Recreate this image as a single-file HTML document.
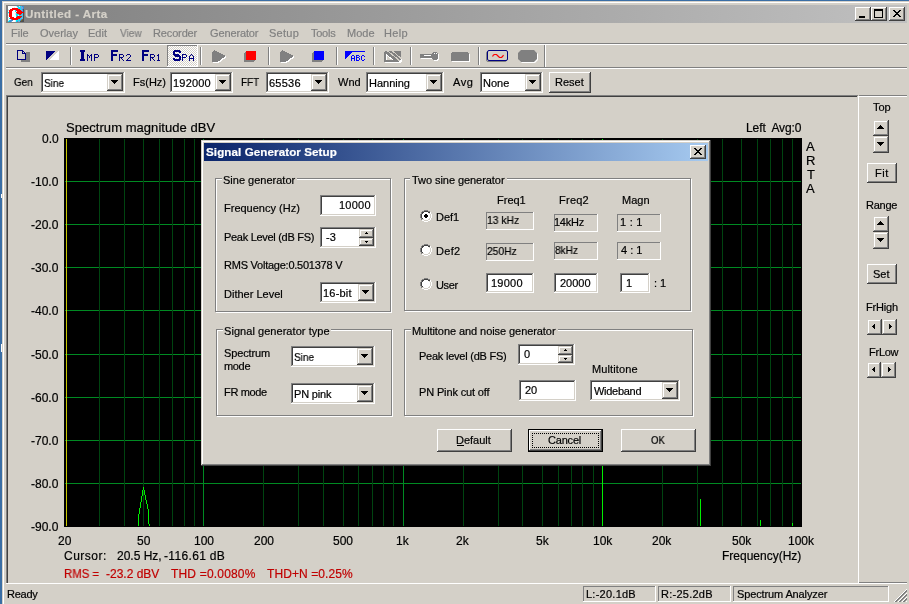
<!DOCTYPE html>
<html><head><meta charset="utf-8"><title>Arta</title>
<style>
html,body{margin:0;padding:0}
body{width:909px;height:604px;overflow:hidden;background:#d4d0c8;position:relative;font-family:"Liberation Sans",sans-serif}
div{position:absolute}
span{position:absolute;white-space:pre;line-height:20px;font-family:"Liberation Sans",sans-serif;will-change:transform;-webkit-text-stroke:0.2px}
</style></head><body>
<div style="left:0px;top:0px;width:909px;height:1px;background:#3a6ea5"></div>
<div style="left:0px;top:0px;width:2px;height:604px;background:#3a6ea5"></div>
<div style="left:1px;top:194px;width:1px;height:4px;background:#fff"></div>
<div style="left:1px;top:344px;width:1px;height:8px;background:#fff"></div>
<div style="left:2px;top:1px;width:907px;height:1px;background:#d4d0c8"></div>
<div style="left:2px;top:1px;width:1px;height:603px;background:#d4d0c8"></div>
<div style="left:3px;top:2px;width:906px;height:1px;background:#fff"></div>
<div style="left:3px;top:2px;width:1px;height:602px;background:#fff"></div>
<div style="left:6px;top:5px;width:901px;height:18px;background:linear-gradient(90deg,#808080,#c0c0c0)"></div>
<svg style="position:absolute;left:8px;top:6px" width="16" height="16" viewBox="0 0 16 16" shape-rendering="crispEdges"><rect x="0" y="0" width="8" height="1" fill="#ffffff"/><rect x="8" y="0" width="1" height="1" fill="#d6ecf8"/><rect x="9" y="0" width="1" height="1" fill="#00e8f8"/><rect x="10" y="0" width="1" height="1" fill="#6aa8e0"/><rect x="11" y="0" width="1" height="1" fill="#d6ecf8"/><rect x="12" y="0" width="1" height="1" fill="#00e8f8"/><rect x="13" y="0" width="1" height="1" fill="#6aa8e0"/><rect x="14" y="0" width="2" height="1" fill="#3c8cd0"/><rect x="0" y="1" width="6" height="1" fill="#ffffff"/><rect x="6" y="1" width="1" height="1" fill="#d6ecf8"/><rect x="7" y="1" width="2" height="1" fill="#ffffff"/><rect x="9" y="1" width="1" height="1" fill="#d6ecf8"/><rect x="10" y="1" width="2" height="1" fill="#00e8f8"/><rect x="12" y="1" width="3" height="1" fill="#6aa8e0"/><rect x="15" y="1" width="1" height="1" fill="#3c8cd0"/><rect x="0" y="2" width="4" height="1" fill="#ffffff"/><rect x="4" y="2" width="6" height="1" fill="#ff0000"/><rect x="10" y="2" width="3" height="1" fill="#00e8f8"/><rect x="13" y="2" width="2" height="1" fill="#6aa8e0"/><rect x="15" y="2" width="1" height="1" fill="#3c8cd0"/><rect x="0" y="3" width="1" height="1" fill="#d6ecf8"/><rect x="1" y="3" width="1" height="1" fill="#ffffff"/><rect x="2" y="3" width="10" height="1" fill="#ff0000"/><rect x="12" y="3" width="1" height="1" fill="#00e8f8"/><rect x="13" y="3" width="1" height="1" fill="#6aa8e0"/><rect x="14" y="3" width="1" height="1" fill="#3c8cd0"/><rect x="15" y="3" width="1" height="1" fill="#505050"/><rect x="0" y="4" width="1" height="1" fill="#d6ecf8"/><rect x="1" y="4" width="4" height="1" fill="#ff0000"/><rect x="5" y="4" width="2" height="1" fill="#ffffff"/><rect x="7" y="4" width="1" height="1" fill="#00e8f8"/><rect x="8" y="4" width="5" height="1" fill="#ff0000"/><rect x="13" y="4" width="2" height="1" fill="#6aa8e0"/><rect x="15" y="4" width="1" height="1" fill="#505050"/><rect x="0" y="5" width="1" height="1" fill="#ffffff"/><rect x="1" y="5" width="3" height="1" fill="#ff0000"/><rect x="4" y="5" width="3" height="1" fill="#ffffff"/><rect x="7" y="5" width="1" height="1" fill="#00e8f8"/><rect x="8" y="5" width="1" height="1" fill="#d6ecf8"/><rect x="9" y="5" width="5" height="1" fill="#ff0000"/><rect x="14" y="5" width="1" height="1" fill="#3c8cd0"/><rect x="15" y="5" width="1" height="1" fill="#505050"/><rect x="0" y="6" width="1" height="1" fill="#00e8f8"/><rect x="1" y="6" width="3" height="1" fill="#ff0000"/><rect x="4" y="6" width="4" height="1" fill="#ffffff"/><rect x="8" y="6" width="8" height="1" fill="#ff0000"/><rect x="0" y="7" width="1" height="1" fill="#d6ecf8"/><rect x="1" y="7" width="3" height="1" fill="#ff0000"/><rect x="4" y="7" width="3" height="1" fill="#ffffff"/><rect x="7" y="7" width="1" height="1" fill="#d6ecf8"/><rect x="8" y="7" width="1" height="1" fill="#00e8f8"/><rect x="9" y="7" width="5" height="1" fill="#ff0000"/><rect x="14" y="7" width="1" height="1" fill="#00e8f8"/><rect x="15" y="7" width="1" height="1" fill="#505050"/><rect x="0" y="8" width="1" height="1" fill="#ffffff"/><rect x="1" y="8" width="3" height="1" fill="#ff0000"/><rect x="4" y="8" width="3" height="1" fill="#ffffff"/><rect x="7" y="8" width="1" height="1" fill="#d6ecf8"/><rect x="8" y="8" width="3" height="1" fill="#00e8f8"/><rect x="11" y="8" width="2" height="1" fill="#ff0000"/><rect x="13" y="8" width="1" height="1" fill="#00e8f8"/><rect x="14" y="8" width="1" height="1" fill="#6aa8e0"/><rect x="15" y="8" width="1" height="1" fill="#505050"/><rect x="0" y="9" width="1" height="1" fill="#d6ecf8"/><rect x="1" y="9" width="3" height="1" fill="#ff0000"/><rect x="4" y="9" width="4" height="1" fill="#ffffff"/><rect x="8" y="9" width="2" height="1" fill="#00e8f8"/><rect x="10" y="9" width="1" height="1" fill="#d6ecf8"/><rect x="11" y="9" width="2" height="1" fill="#00e8f8"/><rect x="13" y="9" width="2" height="1" fill="#6aa8e0"/><rect x="15" y="9" width="1" height="1" fill="#505050"/><rect x="0" y="10" width="1" height="1" fill="#ffffff"/><rect x="1" y="10" width="3" height="1" fill="#ff0000"/><rect x="4" y="10" width="4" height="1" fill="#ffffff"/><rect x="8" y="10" width="1" height="1" fill="#00e8f8"/><rect x="9" y="10" width="5" height="1" fill="#ff0000"/><rect x="14" y="10" width="1" height="1" fill="#00e8f8"/><rect x="15" y="10" width="1" height="1" fill="#505050"/><rect x="0" y="11" width="1" height="1" fill="#d6ecf8"/><rect x="1" y="11" width="1" height="1" fill="#ffffff"/><rect x="2" y="11" width="4" height="1" fill="#ff0000"/><rect x="6" y="11" width="2" height="1" fill="#ffffff"/><rect x="8" y="11" width="5" height="1" fill="#ff0000"/><rect x="13" y="11" width="1" height="1" fill="#00e8f8"/><rect x="14" y="11" width="1" height="1" fill="#6aa8e0"/><rect x="15" y="11" width="1" height="1" fill="#505050"/><rect x="0" y="12" width="1" height="1" fill="#ffffff"/><rect x="1" y="12" width="1" height="1" fill="#00e8f8"/><rect x="2" y="12" width="10" height="1" fill="#ff0000"/><rect x="12" y="12" width="1" height="1" fill="#00e8f8"/><rect x="13" y="12" width="2" height="1" fill="#6aa8e0"/><rect x="15" y="12" width="1" height="1" fill="#505050"/><rect x="0" y="13" width="1" height="1" fill="#d6ecf8"/><rect x="1" y="13" width="1" height="1" fill="#ffffff"/><rect x="2" y="13" width="1" height="1" fill="#d6ecf8"/><rect x="3" y="13" width="1" height="1" fill="#3c8cd0"/><rect x="4" y="13" width="6" height="1" fill="#ff0000"/><rect x="10" y="13" width="2" height="1" fill="#00e8f8"/><rect x="12" y="13" width="1" height="1" fill="#6aa8e0"/><rect x="13" y="13" width="1" height="1" fill="#3c8cd0"/><rect x="14" y="13" width="1" height="1" fill="#807020"/><rect x="15" y="13" width="1" height="1" fill="#505050"/><rect x="0" y="14" width="1" height="1" fill="#d6ecf8"/><rect x="1" y="14" width="1" height="1" fill="#00e8f8"/><rect x="2" y="14" width="3" height="1" fill="#3c8cd0"/><rect x="5" y="14" width="2" height="1" fill="#ffffff"/><rect x="7" y="14" width="1" height="1" fill="#d6ecf8"/><rect x="8" y="14" width="2" height="1" fill="#00e8f8"/><rect x="10" y="14" width="1" height="1" fill="#6aa8e0"/><rect x="11" y="14" width="1" height="1" fill="#00e8f8"/><rect x="12" y="14" width="1" height="1" fill="#3c8cd0"/><rect x="13" y="14" width="1" height="1" fill="#807020"/><rect x="14" y="14" width="2" height="1" fill="#505050"/><rect x="0" y="15" width="1" height="1" fill="#00e8f8"/><rect x="1" y="15" width="2" height="1" fill="#3c8cd0"/><rect x="3" y="15" width="1" height="1" fill="#6aa8e0"/><rect x="4" y="15" width="3" height="1" fill="#ffffff"/><rect x="7" y="15" width="1" height="1" fill="#d6ecf8"/><rect x="8" y="15" width="1" height="1" fill="#00e8f8"/><rect x="9" y="15" width="1" height="1" fill="#3c8cd0"/><rect x="10" y="15" width="2" height="1" fill="#6aa8e0"/><rect x="12" y="15" width="4" height="1" fill="#505050"/></svg>
<div style="left:855px;top:7px;width:16px;height:14px;background:#d4d0c8;box-shadow:inset -1px -1px #404040,inset 1px 1px #fff,inset -2px -2px #808080,inset 2px 2px #d4d0c8;"></div>
<div style="left:859px;top:16px;width:6px;height:2px;background:#000"></div>
<div style="left:871px;top:7px;width:16px;height:14px;background:#d4d0c8;box-shadow:inset -1px -1px #404040,inset 1px 1px #fff,inset -2px -2px #808080,inset 2px 2px #d4d0c8;"></div>
<div style="left:874px;top:9px;width:9px;height:2px;background:#000"></div>
<div style="left:874px;top:9px;width:1px;height:9px;background:#000"></div>
<div style="left:882px;top:9px;width:1px;height:9px;background:#000"></div>
<div style="left:874px;top:17px;width:9px;height:1px;background:#000"></div>
<div style="left:889px;top:7px;width:16px;height:14px;background:#d4d0c8;box-shadow:inset -1px -1px #404040,inset 1px 1px #fff,inset -2px -2px #808080,inset 2px 2px #d4d0c8;"></div>
<svg style="position:absolute;left:893px;top:10px" width="8" height="7" viewBox="0 0 8 7" shape-rendering="crispEdges"><rect x="0" y="0" width="2" height="1" fill="#000"/><rect x="6" y="0" width="2" height="1" fill="#000"/><rect x="1" y="1" width="2" height="1" fill="#000"/><rect x="5" y="1" width="2" height="1" fill="#000"/><rect x="2" y="2" width="4" height="1" fill="#000"/><rect x="3" y="3" width="2" height="1" fill="#000"/><rect x="2" y="4" width="4" height="1" fill="#000"/><rect x="1" y="5" width="2" height="1" fill="#000"/><rect x="5" y="5" width="2" height="1" fill="#000"/><rect x="0" y="6" width="2" height="1" fill="#000"/><rect x="6" y="6" width="2" height="1" fill="#000"/></svg>
<div style="left:6px;top:43px;width:901px;height:1px;background:#808080"></div>
<div style="left:6px;top:44px;width:901px;height:1px;background:#fff"></div>
<div style="left:6px;top:67px;width:901px;height:1px;background:#808080"></div>
<div style="left:6px;top:68px;width:901px;height:1px;background:#fff"></div>
<div style="left:70px;top:47px;width:1px;height:18px;background:#808080"></div>
<div style="left:71px;top:47px;width:1px;height:18px;background:#fff"></div>
<div style="left:200px;top:47px;width:1px;height:18px;background:#808080"></div>
<div style="left:201px;top:47px;width:1px;height:18px;background:#fff"></div>
<div style="left:268px;top:47px;width:1px;height:18px;background:#808080"></div>
<div style="left:269px;top:47px;width:1px;height:18px;background:#fff"></div>
<div style="left:336px;top:47px;width:1px;height:18px;background:#808080"></div>
<div style="left:337px;top:47px;width:1px;height:18px;background:#fff"></div>
<div style="left:373px;top:47px;width:1px;height:18px;background:#808080"></div>
<div style="left:374px;top:47px;width:1px;height:18px;background:#fff"></div>
<div style="left:410px;top:47px;width:1px;height:18px;background:#808080"></div>
<div style="left:411px;top:47px;width:1px;height:18px;background:#fff"></div>
<div style="left:478px;top:47px;width:1px;height:18px;background:#808080"></div>
<div style="left:479px;top:47px;width:1px;height:18px;background:#fff"></div>
<div style="left:544px;top:45px;width:1px;height:22px;background:#808080"></div>
<div style="left:545px;top:45px;width:1px;height:22px;background:#fff"></div>
<svg style="position:absolute;left:17px;top:50px" width="14" height="13" viewBox="0 0 14 13" shape-rendering="crispEdges"><rect x="4" y="2" width="9" height="10" fill="#808080"/><rect x="0" y="0" width="9" height="10" fill="#d4d0c8"/><rect x="0" y="0" width="6" height="1" fill="#000080"/><rect x="0" y="1" width="1" height="1" fill="#000080"/><rect x="5" y="1" width="2" height="1" fill="#000080"/><rect x="0" y="2" width="1" height="1" fill="#000080"/><rect x="5" y="2" width="1" height="1" fill="#000080"/><rect x="7" y="2" width="1" height="1" fill="#000080"/><rect x="0" y="3" width="1" height="1" fill="#000080"/><rect x="5" y="3" width="4" height="1" fill="#000080"/><rect x="0" y="4" width="1" height="1" fill="#000080"/><rect x="8" y="4" width="1" height="1" fill="#000080"/><rect x="0" y="5" width="1" height="1" fill="#000080"/><rect x="8" y="5" width="1" height="1" fill="#000080"/><rect x="0" y="6" width="1" height="1" fill="#000080"/><rect x="8" y="6" width="1" height="1" fill="#000080"/><rect x="0" y="7" width="1" height="1" fill="#000080"/><rect x="8" y="7" width="1" height="1" fill="#000080"/><rect x="0" y="8" width="1" height="1" fill="#000080"/><rect x="8" y="8" width="1" height="1" fill="#000080"/><rect x="0" y="9" width="9" height="1" fill="#000080"/><rect x="6" y="0" width="3" height="1" fill="#d4d0c8"/><rect x="7" y="1" width="2" height="1" fill="#d4d0c8"/><rect x="8" y="2" width="1" height="1" fill="#d4d0c8"/></svg>
<svg style="position:absolute;left:46px;top:51px" width="13" height="9" viewBox="0 0 13 9" shape-rendering="crispEdges"><polygon points="0,0 10,0 0,9.5" fill="#000080"/><polygon points="13,0 13,9 3.5,9" fill="#fff"/></svg>
<svg style="position:absolute;left:80px;top:50px" width="26" height="12" viewBox="0 0 26 12" shape-rendering="crispEdges"><rect x="0" y="0" width="5" height="1" fill="#000080"/><rect x="0" y="1" width="5" height="1" fill="#000080"/><rect x="1" y="2" width="3" height="1" fill="#000080"/><rect x="1" y="3" width="3" height="1" fill="#000080"/><rect x="1" y="4" width="3" height="1" fill="#000080"/><rect x="1" y="5" width="3" height="1" fill="#000080"/><rect x="1" y="6" width="3" height="1" fill="#000080"/><rect x="1" y="7" width="3" height="1" fill="#000080"/><rect x="1" y="8" width="3" height="1" fill="#000080"/><rect x="0" y="9" width="5" height="1" fill="#000080"/><rect x="0" y="10" width="5" height="1" fill="#000080"/><rect x="7" y="4" width="1" height="1" fill="#000080"/><rect x="11" y="4" width="1" height="1" fill="#000080"/><rect x="7" y="5" width="2" height="1" fill="#000080"/><rect x="10" y="5" width="2" height="1" fill="#000080"/><rect x="7" y="6" width="1" height="1" fill="#000080"/><rect x="9" y="6" width="1" height="1" fill="#000080"/><rect x="11" y="6" width="1" height="1" fill="#000080"/><rect x="7" y="7" width="1" height="1" fill="#000080"/><rect x="9" y="7" width="1" height="1" fill="#000080"/><rect x="11" y="7" width="1" height="1" fill="#000080"/><rect x="7" y="8" width="1" height="1" fill="#000080"/><rect x="11" y="8" width="1" height="1" fill="#000080"/><rect x="7" y="9" width="1" height="1" fill="#000080"/><rect x="11" y="9" width="1" height="1" fill="#000080"/><rect x="7" y="10" width="1" height="1" fill="#000080"/><rect x="11" y="10" width="1" height="1" fill="#000080"/><rect x="14" y="4" width="4" height="1" fill="#000080"/><rect x="14" y="5" width="1" height="1" fill="#000080"/><rect x="18" y="5" width="1" height="1" fill="#000080"/><rect x="14" y="6" width="1" height="1" fill="#000080"/><rect x="18" y="6" width="1" height="1" fill="#000080"/><rect x="14" y="7" width="4" height="1" fill="#000080"/><rect x="14" y="8" width="1" height="1" fill="#000080"/><rect x="14" y="9" width="1" height="1" fill="#000080"/><rect x="14" y="10" width="1" height="1" fill="#000080"/></svg>
<svg style="position:absolute;left:111px;top:50px" width="26" height="12" viewBox="0 0 26 12" shape-rendering="crispEdges"><rect x="0" y="0" width="7" height="1" fill="#000080"/><rect x="0" y="1" width="7" height="1" fill="#000080"/><rect x="0" y="2" width="2" height="1" fill="#000080"/><rect x="0" y="3" width="2" height="1" fill="#000080"/><rect x="0" y="4" width="6" height="1" fill="#000080"/><rect x="0" y="5" width="6" height="1" fill="#000080"/><rect x="0" y="6" width="2" height="1" fill="#000080"/><rect x="0" y="7" width="2" height="1" fill="#000080"/><rect x="0" y="8" width="2" height="1" fill="#000080"/><rect x="0" y="9" width="2" height="1" fill="#000080"/><rect x="0" y="10" width="2" height="1" fill="#000080"/><rect x="8" y="4" width="4" height="1" fill="#000080"/><rect x="8" y="5" width="1" height="1" fill="#000080"/><rect x="12" y="5" width="1" height="1" fill="#000080"/><rect x="8" y="6" width="1" height="1" fill="#000080"/><rect x="12" y="6" width="1" height="1" fill="#000080"/><rect x="8" y="7" width="4" height="1" fill="#000080"/><rect x="8" y="8" width="1" height="1" fill="#000080"/><rect x="10" y="8" width="1" height="1" fill="#000080"/><rect x="8" y="9" width="1" height="1" fill="#000080"/><rect x="11" y="9" width="1" height="1" fill="#000080"/><rect x="8" y="10" width="1" height="1" fill="#000080"/><rect x="12" y="10" width="1" height="1" fill="#000080"/><rect x="16" y="4" width="3" height="1" fill="#000080"/><rect x="15" y="5" width="1" height="1" fill="#000080"/><rect x="19" y="5" width="1" height="1" fill="#000080"/><rect x="19" y="6" width="1" height="1" fill="#000080"/><rect x="18" y="7" width="1" height="1" fill="#000080"/><rect x="17" y="8" width="1" height="1" fill="#000080"/><rect x="16" y="9" width="1" height="1" fill="#000080"/><rect x="15" y="10" width="5" height="1" fill="#000080"/></svg>
<svg style="position:absolute;left:142px;top:50px" width="26" height="12" viewBox="0 0 26 12" shape-rendering="crispEdges"><rect x="0" y="0" width="7" height="1" fill="#000080"/><rect x="0" y="1" width="7" height="1" fill="#000080"/><rect x="0" y="2" width="2" height="1" fill="#000080"/><rect x="0" y="3" width="2" height="1" fill="#000080"/><rect x="0" y="4" width="6" height="1" fill="#000080"/><rect x="0" y="5" width="6" height="1" fill="#000080"/><rect x="0" y="6" width="2" height="1" fill="#000080"/><rect x="0" y="7" width="2" height="1" fill="#000080"/><rect x="0" y="8" width="2" height="1" fill="#000080"/><rect x="0" y="9" width="2" height="1" fill="#000080"/><rect x="0" y="10" width="2" height="1" fill="#000080"/><rect x="8" y="4" width="4" height="1" fill="#000080"/><rect x="8" y="5" width="1" height="1" fill="#000080"/><rect x="12" y="5" width="1" height="1" fill="#000080"/><rect x="8" y="6" width="1" height="1" fill="#000080"/><rect x="12" y="6" width="1" height="1" fill="#000080"/><rect x="8" y="7" width="4" height="1" fill="#000080"/><rect x="8" y="8" width="1" height="1" fill="#000080"/><rect x="10" y="8" width="1" height="1" fill="#000080"/><rect x="8" y="9" width="1" height="1" fill="#000080"/><rect x="11" y="9" width="1" height="1" fill="#000080"/><rect x="8" y="10" width="1" height="1" fill="#000080"/><rect x="12" y="10" width="1" height="1" fill="#000080"/><rect x="16" y="4" width="1" height="1" fill="#000080"/><rect x="15" y="5" width="2" height="1" fill="#000080"/><rect x="16" y="6" width="1" height="1" fill="#000080"/><rect x="16" y="7" width="1" height="1" fill="#000080"/><rect x="16" y="8" width="1" height="1" fill="#000080"/><rect x="16" y="9" width="1" height="1" fill="#000080"/><rect x="15" y="10" width="3" height="1" fill="#000080"/></svg>
<div style="left:167px;top:45px;width:31px;height:22px;background:#d4d0c8 conic-gradient(#fff 25%,#d4d0c8 0 50%,#fff 0 75%,#d4d0c8 0) 0 0/2px 2px;box-shadow:inset -1px -1px #fff,inset 1px 1px #808080"></div>
<svg style="position:absolute;left:173px;top:50px" width="26" height="12" viewBox="0 0 26 12" shape-rendering="crispEdges"><rect x="1" y="0" width="6" height="1" fill="#000080"/><rect x="0" y="1" width="8" height="1" fill="#000080"/><rect x="0" y="2" width="2" height="1" fill="#000080"/><rect x="6" y="2" width="2" height="1" fill="#000080"/><rect x="0" y="3" width="2" height="1" fill="#000080"/><rect x="0" y="4" width="6" height="1" fill="#000080"/><rect x="1" y="5" width="6" height="1" fill="#000080"/><rect x="2" y="6" width="6" height="1" fill="#000080"/><rect x="6" y="7" width="2" height="1" fill="#000080"/><rect x="0" y="8" width="2" height="1" fill="#000080"/><rect x="6" y="8" width="2" height="1" fill="#000080"/><rect x="0" y="9" width="8" height="1" fill="#000080"/><rect x="1" y="10" width="6" height="1" fill="#000080"/><rect x="9" y="4" width="4" height="1" fill="#000080"/><rect x="9" y="5" width="1" height="1" fill="#000080"/><rect x="13" y="5" width="1" height="1" fill="#000080"/><rect x="9" y="6" width="1" height="1" fill="#000080"/><rect x="13" y="6" width="1" height="1" fill="#000080"/><rect x="9" y="7" width="4" height="1" fill="#000080"/><rect x="9" y="8" width="1" height="1" fill="#000080"/><rect x="9" y="9" width="1" height="1" fill="#000080"/><rect x="9" y="10" width="1" height="1" fill="#000080"/><rect x="18" y="4" width="1" height="1" fill="#000080"/><rect x="17" y="5" width="1" height="1" fill="#000080"/><rect x="19" y="5" width="1" height="1" fill="#000080"/><rect x="16" y="6" width="1" height="1" fill="#000080"/><rect x="20" y="6" width="1" height="1" fill="#000080"/><rect x="16" y="7" width="1" height="1" fill="#000080"/><rect x="20" y="7" width="1" height="1" fill="#000080"/><rect x="16" y="8" width="5" height="1" fill="#000080"/><rect x="16" y="9" width="1" height="1" fill="#000080"/><rect x="20" y="9" width="1" height="1" fill="#000080"/><rect x="16" y="10" width="1" height="1" fill="#000080"/><rect x="20" y="10" width="1" height="1" fill="#000080"/></svg>
<svg style="position:absolute;left:212px;top:50px" width="16" height="14" viewBox="0 0 16 14" shape-rendering="crispEdges"><polygon points="1,3 3,1 15,7 6.5,13 1,13" fill="#fff"/><polygon points="0,2 2,0 14,6 5.5,12 0,12" fill="#808080"/></svg>
<svg style="position:absolute;left:280px;top:50px" width="16" height="14" viewBox="0 0 16 14" shape-rendering="crispEdges"><polygon points="1,3 3,1 15,7 6.5,13 1,13" fill="#fff"/><polygon points="0,2 2,0 14,6 5.5,12 0,12" fill="#808080"/></svg>
<svg style="position:absolute;left:244px;top:51px" width="12" height="11" viewBox="0 0 12 11" shape-rendering="crispEdges"><polygon points="0,2 2,0 11,0 11,9 9,11 0,11" fill="#808080"/><rect x="2" y="0" width="10" height="9" fill="#ff0000"/></svg>
<svg style="position:absolute;left:312px;top:51px" width="12" height="11" viewBox="0 0 12 11" shape-rendering="crispEdges"><polygon points="0,2 2,0 11,0 11,9 9,11 0,11" fill="#808080"/><rect x="2" y="0" width="10" height="9" fill="#0000ff"/></svg>
<svg style="position:absolute;left:345px;top:51px" width="21" height="10" viewBox="0 0 21 10" shape-rendering="crispEdges"><rect x="0" y="0" width="20" height="1" fill="#00f"/><rect x="0" y="0" width="8" height="1" fill="#0000ff"/><rect x="0" y="1" width="7" height="1" fill="#0000ff"/><rect x="0" y="2" width="6" height="1" fill="#0000ff"/><rect x="0" y="3" width="5" height="1" fill="#0000ff"/><rect x="0" y="4" width="4" height="1" fill="#0000ff"/><rect x="0" y="5" width="3" height="1" fill="#0000ff"/><rect x="0" y="6" width="2" height="1" fill="#0000ff"/><rect x="0" y="7" width="1" height="1" fill="#0000ff"/><rect x="7" y="4" width="2" height="1" fill="#00f"/><rect x="6" y="5" width="1" height="1" fill="#00f"/><rect x="9" y="5" width="1" height="1" fill="#00f"/><rect x="6" y="6" width="1" height="1" fill="#00f"/><rect x="9" y="6" width="1" height="1" fill="#00f"/><rect x="6" y="7" width="4" height="1" fill="#00f"/><rect x="6" y="8" width="1" height="1" fill="#00f"/><rect x="9" y="8" width="1" height="1" fill="#00f"/><rect x="6" y="9" width="1" height="1" fill="#00f"/><rect x="9" y="9" width="1" height="1" fill="#00f"/><rect x="11" y="4" width="3" height="1" fill="#00f"/><rect x="11" y="5" width="1" height="1" fill="#00f"/><rect x="14" y="5" width="1" height="1" fill="#00f"/><rect x="11" y="6" width="3" height="1" fill="#00f"/><rect x="11" y="7" width="1" height="1" fill="#00f"/><rect x="14" y="7" width="1" height="1" fill="#00f"/><rect x="11" y="8" width="1" height="1" fill="#00f"/><rect x="14" y="8" width="1" height="1" fill="#00f"/><rect x="11" y="9" width="3" height="1" fill="#00f"/><rect x="17" y="4" width="2" height="1" fill="#00f"/><rect x="16" y="5" width="1" height="1" fill="#00f"/><rect x="19" y="5" width="1" height="1" fill="#00f"/><rect x="16" y="6" width="1" height="1" fill="#00f"/><rect x="16" y="7" width="1" height="1" fill="#00f"/><rect x="16" y="8" width="1" height="1" fill="#00f"/><rect x="19" y="8" width="1" height="1" fill="#00f"/><rect x="17" y="9" width="2" height="1" fill="#00f"/></svg>
<svg style="position:absolute;left:384px;top:51px" width="19" height="13" viewBox="0 0 19 13" shape-rendering="crispEdges"><polygon points="1,2 2,1 17,1 17,8 18,8 18,11 16,12 1,12" fill="#fff"/><polygon points="0,1 1,0 17,0 17,8 15,11 0,11" fill="#808080"/><polygon points="2,3 2,9 10,9" fill="#fff"/><polygon points="3,5 3,9 8.5,9" fill="#d4d0c8"/><line x1="3" y1="-0.5" x2="16" y2="10" stroke="#d4d0c8" stroke-width="1.1"/><line x1="8" y1="-0.5" x2="17.5" y2="8" stroke="#d4d0c8" stroke-width="1.1"/></svg>
<svg style="position:absolute;left:420px;top:52px" width="20" height="10" viewBox="0 0 20 10" shape-rendering="crispEdges"><rect x="14" y="1" width="4" height="1" fill="#fff"/><rect x="13" y="2" width="6" height="1" fill="#fff"/><rect x="1" y="3" width="18" height="1" fill="#fff"/><rect x="1" y="4" width="18" height="1" fill="#fff"/><rect x="1" y="5" width="18" height="1" fill="#fff"/><rect x="1" y="6" width="18" height="1" fill="#fff"/><rect x="13" y="7" width="6" height="1" fill="#fff"/><rect x="14" y="8" width="4" height="1" fill="#fff"/><rect x="13" y="0" width="4" height="1" fill="#808080"/><rect x="12" y="1" width="2" height="1" fill="#808080"/><rect x="14" y="1" width="1" height="1" fill="#fff"/><rect x="15" y="1" width="1" height="1" fill="#808080"/><rect x="16" y="1" width="1" height="1" fill="#fff"/><rect x="17" y="1" width="1" height="1" fill="#808080"/><rect x="0" y="2" width="18" height="1" fill="#808080"/><rect x="0" y="3" width="4" height="1" fill="#808080"/><rect x="4" y="3" width="7" height="1" fill="#fff"/><rect x="11" y="3" width="7" height="1" fill="#808080"/><rect x="0" y="4" width="18" height="1" fill="#808080"/><rect x="0" y="5" width="18" height="1" fill="#808080"/><rect x="12" y="6" width="6" height="1" fill="#808080"/><rect x="13" y="7" width="4" height="1" fill="#808080"/></svg>
<svg style="position:absolute;left:451px;top:52px" width="20" height="11" viewBox="0 0 20 11" shape-rendering="crispEdges"><rect x="2" y="1" width="16" height="1" fill="#fff"/><rect x="1" y="2" width="18" height="1" fill="#fff"/><rect x="1" y="3" width="18" height="1" fill="#fff"/><rect x="1" y="4" width="18" height="1" fill="#fff"/><rect x="1" y="5" width="18" height="1" fill="#fff"/><rect x="1" y="6" width="18" height="1" fill="#fff"/><rect x="1" y="7" width="18" height="1" fill="#fff"/><rect x="1" y="8" width="18" height="1" fill="#fff"/><rect x="1" y="9" width="18" height="1" fill="#fff"/><rect x="1" y="0" width="16" height="1" fill="#808080"/><rect x="0" y="1" width="18" height="1" fill="#808080"/><rect x="0" y="2" width="18" height="1" fill="#808080"/><rect x="0" y="3" width="18" height="1" fill="#808080"/><rect x="0" y="4" width="18" height="1" fill="#808080"/><rect x="0" y="5" width="18" height="1" fill="#808080"/><rect x="0" y="6" width="18" height="1" fill="#808080"/><rect x="0" y="7" width="18" height="1" fill="#808080"/><rect x="0" y="8" width="18" height="1" fill="#808080"/></svg>
<svg style="position:absolute;left:486px;top:50px" width="23" height="13" viewBox="0 0 23 13" shape-rendering="auto"><rect x="0.5" y="1.5" width="20" height="10" rx="1.5" fill="none" stroke="#808080"/><rect x="1.5" y="0.5" width="20" height="10" rx="1.5" fill="#d4d0c8" stroke="#000080"/><polyline points="6.5,6.5 7.5,5 8.5,4.5 10.5,4.5 12.5,6.5 13.5,7.5 15.5,7.5 16.5,6.5 17.5,5" fill="none" stroke="#ff0000" stroke-width="1.2"/></svg>
<svg style="position:absolute;left:518px;top:50px" width="21" height="14" viewBox="0 0 21 14" shape-rendering="auto"><polygon points="4,1 17,1 20,4 20,10 17,13 4,13 1,10 1,4" fill="#fff"/><polygon points="3,0 16,0 19,3 19,9 16,12 3,12 0,9 0,3" fill="#808080"/></svg>
<div style="left:41px;top:72px;width:84px;height:21px;background:#fff;box-shadow:inset -1px -1px #fff,inset 1px 1px #808080,inset -2px -2px #d4d0c8,inset 2px 2px #404040"></div>
<div style="left:107px;top:74px;width:16px;height:17px;background:#d4d0c8;box-shadow:inset -1px -1px #404040,inset 1px 1px #d4d0c8,inset -2px -2px #808080,inset 2px 2px #fff"></div>
<div style="left:111px;top:80px;width:7px;height:1px;background:#000"></div>
<div style="left:112px;top:81px;width:5px;height:1px;background:#000"></div>
<div style="left:113px;top:82px;width:3px;height:1px;background:#000"></div>
<div style="left:114px;top:83px;width:1px;height:1px;background:#000"></div>
<div style="left:170px;top:72px;width:63px;height:21px;background:#fff;box-shadow:inset -1px -1px #fff,inset 1px 1px #808080,inset -2px -2px #d4d0c8,inset 2px 2px #404040"></div>
<div style="left:215px;top:74px;width:16px;height:17px;background:#d4d0c8;box-shadow:inset -1px -1px #404040,inset 1px 1px #d4d0c8,inset -2px -2px #808080,inset 2px 2px #fff"></div>
<div style="left:219px;top:80px;width:7px;height:1px;background:#000"></div>
<div style="left:220px;top:81px;width:5px;height:1px;background:#000"></div>
<div style="left:221px;top:82px;width:3px;height:1px;background:#000"></div>
<div style="left:222px;top:83px;width:1px;height:1px;background:#000"></div>
<div style="left:266px;top:72px;width:63px;height:21px;background:#fff;box-shadow:inset -1px -1px #fff,inset 1px 1px #808080,inset -2px -2px #d4d0c8,inset 2px 2px #404040"></div>
<div style="left:311px;top:74px;width:16px;height:17px;background:#d4d0c8;box-shadow:inset -1px -1px #404040,inset 1px 1px #d4d0c8,inset -2px -2px #808080,inset 2px 2px #fff"></div>
<div style="left:315px;top:80px;width:7px;height:1px;background:#000"></div>
<div style="left:316px;top:81px;width:5px;height:1px;background:#000"></div>
<div style="left:317px;top:82px;width:3px;height:1px;background:#000"></div>
<div style="left:318px;top:83px;width:1px;height:1px;background:#000"></div>
<div style="left:366px;top:72px;width:78px;height:21px;background:#fff;box-shadow:inset -1px -1px #fff,inset 1px 1px #808080,inset -2px -2px #d4d0c8,inset 2px 2px #404040"></div>
<div style="left:426px;top:74px;width:16px;height:17px;background:#d4d0c8;box-shadow:inset -1px -1px #404040,inset 1px 1px #d4d0c8,inset -2px -2px #808080,inset 2px 2px #fff"></div>
<div style="left:430px;top:80px;width:7px;height:1px;background:#000"></div>
<div style="left:431px;top:81px;width:5px;height:1px;background:#000"></div>
<div style="left:432px;top:82px;width:3px;height:1px;background:#000"></div>
<div style="left:433px;top:83px;width:1px;height:1px;background:#000"></div>
<div style="left:480px;top:72px;width:63px;height:21px;background:#fff;box-shadow:inset -1px -1px #fff,inset 1px 1px #808080,inset -2px -2px #d4d0c8,inset 2px 2px #404040"></div>
<div style="left:525px;top:74px;width:16px;height:17px;background:#d4d0c8;box-shadow:inset -1px -1px #404040,inset 1px 1px #d4d0c8,inset -2px -2px #808080,inset 2px 2px #fff"></div>
<div style="left:529px;top:80px;width:7px;height:1px;background:#000"></div>
<div style="left:530px;top:81px;width:5px;height:1px;background:#000"></div>
<div style="left:531px;top:82px;width:3px;height:1px;background:#000"></div>
<div style="left:532px;top:83px;width:1px;height:1px;background:#000"></div>
<div style="left:549px;top:72px;width:42px;height:21px;background:#d4d0c8;box-shadow:inset -1px -1px #404040,inset 1px 1px #fff,inset -2px -2px #808080,inset 2px 2px #d4d0c8;"></div>
<div style="left:6px;top:95px;width:852px;height:1px;background:#808080"></div>
<div style="left:6px;top:95px;width:1px;height:488px;background:#808080"></div>
<div style="left:7px;top:96px;width:850px;height:1px;background:#404040"></div>
<div style="left:7px;top:96px;width:1px;height:487px;background:#404040"></div>
<div style="left:858px;top:96px;width:1px;height:488px;background:#fff"></div>
<div style="left:6px;top:583px;width:853px;height:1px;background:#fff"></div>
<div style="left:859px;top:95px;width:48px;height:1px;background:#808080"></div>
<div style="left:859px;top:96px;width:48px;height:1px;background:#fff"></div>
<div style="left:859px;top:582px;width:48px;height:1px;background:#808080"></div>
<div style="left:859px;top:583px;width:48px;height:1px;background:#fff"></div>
<div style="left:64px;top:138px;width:738px;height:389px;background:#000"></div>
<div style="left:65px;top:181px;width:736px;height:1px;background:#008a22"></div>
<div style="left:65px;top:224px;width:736px;height:1px;background:#008a22"></div>
<div style="left:65px;top:267px;width:736px;height:1px;background:#008a22"></div>
<div style="left:65px;top:310px;width:736px;height:1px;background:#008a22"></div>
<div style="left:65px;top:354px;width:736px;height:1px;background:#008a22"></div>
<div style="left:65px;top:397px;width:736px;height:1px;background:#008a22"></div>
<div style="left:65px;top:440px;width:736px;height:1px;background:#008a22"></div>
<div style="left:65px;top:483px;width:736px;height:1px;background:#008a22"></div>
<div style="left:99px;top:139px;width:1px;height:387px;background:#004410"></div>
<div style="left:124px;top:139px;width:1px;height:387px;background:#004410"></div>
<div style="left:143px;top:139px;width:1px;height:387px;background:#004410"></div>
<div style="left:159px;top:139px;width:1px;height:387px;background:#004410"></div>
<div style="left:172px;top:139px;width:1px;height:387px;background:#004410"></div>
<div style="left:184px;top:139px;width:1px;height:387px;background:#004410"></div>
<div style="left:194px;top:139px;width:1px;height:387px;background:#004410"></div>
<div style="left:203px;top:139px;width:1px;height:387px;background:#008a22"></div>
<div style="left:263px;top:139px;width:1px;height:387px;background:#004410"></div>
<div style="left:298px;top:139px;width:1px;height:387px;background:#004410"></div>
<div style="left:323px;top:139px;width:1px;height:387px;background:#004410"></div>
<div style="left:343px;top:139px;width:1px;height:387px;background:#004410"></div>
<div style="left:358px;top:139px;width:1px;height:387px;background:#004410"></div>
<div style="left:372px;top:139px;width:1px;height:387px;background:#004410"></div>
<div style="left:383px;top:139px;width:1px;height:387px;background:#004410"></div>
<div style="left:393px;top:139px;width:1px;height:387px;background:#004410"></div>
<div style="left:403px;top:139px;width:1px;height:387px;background:#008a22"></div>
<div style="left:463px;top:139px;width:1px;height:387px;background:#004410"></div>
<div style="left:498px;top:139px;width:1px;height:387px;background:#004410"></div>
<div style="left:522px;top:139px;width:1px;height:387px;background:#004410"></div>
<div style="left:542px;top:139px;width:1px;height:387px;background:#004410"></div>
<div style="left:558px;top:139px;width:1px;height:387px;background:#004410"></div>
<div style="left:571px;top:139px;width:1px;height:387px;background:#004410"></div>
<div style="left:582px;top:139px;width:1px;height:387px;background:#004410"></div>
<div style="left:593px;top:139px;width:1px;height:387px;background:#004410"></div>
<div style="left:602px;top:139px;width:1px;height:387px;background:#008a22"></div>
<div style="left:662px;top:139px;width:1px;height:387px;background:#004410"></div>
<div style="left:697px;top:139px;width:1px;height:387px;background:#004410"></div>
<div style="left:722px;top:139px;width:1px;height:387px;background:#004410"></div>
<div style="left:741px;top:139px;width:1px;height:387px;background:#004410"></div>
<div style="left:757px;top:139px;width:1px;height:387px;background:#004410"></div>
<div style="left:770px;top:139px;width:1px;height:387px;background:#004410"></div>
<div style="left:782px;top:139px;width:1px;height:387px;background:#004410"></div>
<div style="left:792px;top:139px;width:1px;height:387px;background:#004410"></div>
<div style="left:66px;top:139px;width:1px;height:387px;background:#c8c800"></div>
<div style="left:602px;top:139px;width:1px;height:387px;background:#00ee00"></div>
<div style="left:700px;top:499px;width:1px;height:27px;background:#00ee00"></div>
<div style="left:760px;top:520px;width:1px;height:6px;background:#00ee00"></div>
<div style="left:792px;top:523px;width:1px;height:3px;background:#00ee00"></div>
<div style="left:143px;top:487px;width:1px;height:3px;background:#00ee00"></div>
<div style="left:142px;top:490px;width:1px;height:6px;background:#00ee00"></div>
<div style="left:141px;top:496px;width:1px;height:6px;background:#00ee00"></div>
<div style="left:140px;top:502px;width:1px;height:6px;background:#00ee00"></div>
<div style="left:139px;top:508px;width:1px;height:6px;background:#00ee00"></div>
<div style="left:138px;top:514px;width:1px;height:12px;background:#00ee00"></div>
<div style="left:144px;top:490px;width:1px;height:5px;background:#00ee00"></div>
<div style="left:145px;top:495px;width:1px;height:5px;background:#00ee00"></div>
<div style="left:146px;top:500px;width:1px;height:4px;background:#00ee00"></div>
<div style="left:147px;top:504px;width:1px;height:5px;background:#00ee00"></div>
<div style="left:148px;top:509px;width:1px;height:15px;background:#00ee00"></div>
<div style="left:149px;top:524px;width:1px;height:2px;background:#00ee00"></div>
<div style="left:873px;top:120px;width:16px;height:16px;background:#d4d0c8;box-shadow:inset -1px -1px #404040,inset 1px 1px #d4d0c8,inset -2px -2px #808080,inset 2px 2px #fff"></div>
<div style="left:873px;top:136px;width:16px;height:17px;background:#d4d0c8;box-shadow:inset -1px -1px #404040,inset 1px 1px #d4d0c8,inset -2px -2px #808080,inset 2px 2px #fff"></div>
<div style="left:880px;top:125px;width:1px;height:1px;background:#000"></div>
<div style="left:879px;top:126px;width:3px;height:1px;background:#000"></div>
<div style="left:878px;top:127px;width:5px;height:1px;background:#000"></div>
<div style="left:877px;top:128px;width:7px;height:1px;background:#000"></div>
<div style="left:877px;top:142px;width:7px;height:1px;background:#000"></div>
<div style="left:878px;top:143px;width:5px;height:1px;background:#000"></div>
<div style="left:879px;top:144px;width:3px;height:1px;background:#000"></div>
<div style="left:880px;top:145px;width:1px;height:1px;background:#000"></div>
<div style="left:873px;top:216px;width:16px;height:16px;background:#d4d0c8;box-shadow:inset -1px -1px #404040,inset 1px 1px #d4d0c8,inset -2px -2px #808080,inset 2px 2px #fff"></div>
<div style="left:873px;top:232px;width:16px;height:17px;background:#d4d0c8;box-shadow:inset -1px -1px #404040,inset 1px 1px #d4d0c8,inset -2px -2px #808080,inset 2px 2px #fff"></div>
<div style="left:880px;top:221px;width:1px;height:1px;background:#000"></div>
<div style="left:879px;top:222px;width:3px;height:1px;background:#000"></div>
<div style="left:878px;top:223px;width:5px;height:1px;background:#000"></div>
<div style="left:877px;top:224px;width:7px;height:1px;background:#000"></div>
<div style="left:877px;top:238px;width:7px;height:1px;background:#000"></div>
<div style="left:878px;top:239px;width:5px;height:1px;background:#000"></div>
<div style="left:879px;top:240px;width:3px;height:1px;background:#000"></div>
<div style="left:880px;top:241px;width:1px;height:1px;background:#000"></div>
<div style="left:867px;top:163px;width:30px;height:20px;background:#d4d0c8;box-shadow:inset -1px -1px #404040,inset 1px 1px #fff,inset -2px -2px #808080,inset 2px 2px #d4d0c8;"></div>
<div style="left:867px;top:264px;width:30px;height:20px;background:#d4d0c8;box-shadow:inset -1px -1px #404040,inset 1px 1px #fff,inset -2px -2px #808080,inset 2px 2px #d4d0c8;"></div>
<div style="left:867px;top:319px;width:15px;height:16px;background:#d4d0c8;box-shadow:inset -1px -1px #404040,inset 1px 1px #d4d0c8,inset -2px -2px #808080,inset 2px 2px #fff"></div>
<div style="left:882px;top:319px;width:15px;height:16px;background:#d4d0c8;box-shadow:inset -1px -1px #404040,inset 1px 1px #d4d0c8,inset -2px -2px #808080,inset 2px 2px #fff"></div>
<div style="left:872px;top:326px;width:1px;height:1px;background:#000"></div>
<div style="left:891px;top:326px;width:1px;height:1px;background:#000"></div>
<div style="left:873px;top:325px;width:1px;height:3px;background:#000"></div>
<div style="left:890px;top:325px;width:1px;height:3px;background:#000"></div>
<div style="left:874px;top:324px;width:1px;height:5px;background:#000"></div>
<div style="left:889px;top:324px;width:1px;height:5px;background:#000"></div>
<div style="left:867px;top:362px;width:14px;height:16px;background:#d4d0c8;box-shadow:inset -1px -1px #404040,inset 1px 1px #d4d0c8,inset -2px -2px #808080,inset 2px 2px #fff"></div>
<div style="left:881px;top:362px;width:15px;height:16px;background:#d4d0c8;box-shadow:inset -1px -1px #404040,inset 1px 1px #d4d0c8,inset -2px -2px #808080,inset 2px 2px #fff"></div>
<div style="left:872px;top:369px;width:1px;height:1px;background:#000"></div>
<div style="left:890px;top:369px;width:1px;height:1px;background:#000"></div>
<div style="left:873px;top:368px;width:1px;height:3px;background:#000"></div>
<div style="left:889px;top:368px;width:1px;height:3px;background:#000"></div>
<div style="left:874px;top:367px;width:1px;height:5px;background:#000"></div>
<div style="left:888px;top:367px;width:1px;height:5px;background:#000"></div>
<div style="left:583px;top:586px;width:73px;height:16px;background:#d4d0c8;box-shadow:inset -1px -1px #fff,inset 1px 1px #808080"></div>
<div style="left:658px;top:586px;width:73px;height:16px;background:#d4d0c8;box-shadow:inset -1px -1px #fff,inset 1px 1px #808080"></div>
<div style="left:733px;top:586px;width:156px;height:16px;background:#d4d0c8;box-shadow:inset -1px -1px #fff,inset 1px 1px #808080"></div>
<svg style="position:absolute;left:894px;top:589px" width="13" height="13" viewBox="0 0 13 13" shape-rendering="crispEdges"><rect x="12" y="0" width="1" height="1" fill="#fff"/><rect x="11" y="1" width="1" height="1" fill="#fff"/><rect x="12" y="1" width="1" height="1" fill="#808080"/><rect x="10" y="2" width="1" height="1" fill="#fff"/><rect x="11" y="2" width="2" height="1" fill="#808080"/><rect x="9" y="3" width="1" height="1" fill="#fff"/><rect x="10" y="3" width="2" height="1" fill="#808080"/><rect x="8" y="4" width="1" height="1" fill="#fff"/><rect x="9" y="4" width="2" height="1" fill="#808080"/><rect x="12" y="4" width="1" height="1" fill="#fff"/><rect x="7" y="5" width="1" height="1" fill="#fff"/><rect x="8" y="5" width="2" height="1" fill="#808080"/><rect x="11" y="5" width="1" height="1" fill="#fff"/><rect x="12" y="5" width="1" height="1" fill="#808080"/><rect x="6" y="6" width="1" height="1" fill="#fff"/><rect x="7" y="6" width="2" height="1" fill="#808080"/><rect x="10" y="6" width="1" height="1" fill="#fff"/><rect x="11" y="6" width="2" height="1" fill="#808080"/><rect x="5" y="7" width="1" height="1" fill="#fff"/><rect x="6" y="7" width="2" height="1" fill="#808080"/><rect x="9" y="7" width="1" height="1" fill="#fff"/><rect x="10" y="7" width="2" height="1" fill="#808080"/><rect x="4" y="8" width="1" height="1" fill="#fff"/><rect x="5" y="8" width="2" height="1" fill="#808080"/><rect x="8" y="8" width="1" height="1" fill="#fff"/><rect x="9" y="8" width="2" height="1" fill="#808080"/><rect x="12" y="8" width="1" height="1" fill="#fff"/><rect x="3" y="9" width="1" height="1" fill="#fff"/><rect x="4" y="9" width="2" height="1" fill="#808080"/><rect x="7" y="9" width="1" height="1" fill="#fff"/><rect x="8" y="9" width="2" height="1" fill="#808080"/><rect x="11" y="9" width="1" height="1" fill="#fff"/><rect x="12" y="9" width="1" height="1" fill="#808080"/><rect x="2" y="10" width="1" height="1" fill="#fff"/><rect x="3" y="10" width="2" height="1" fill="#808080"/><rect x="6" y="10" width="1" height="1" fill="#fff"/><rect x="7" y="10" width="2" height="1" fill="#808080"/><rect x="10" y="10" width="1" height="1" fill="#fff"/><rect x="11" y="10" width="2" height="1" fill="#808080"/><rect x="1" y="11" width="1" height="1" fill="#fff"/><rect x="2" y="11" width="2" height="1" fill="#808080"/><rect x="5" y="11" width="1" height="1" fill="#fff"/><rect x="6" y="11" width="2" height="1" fill="#808080"/><rect x="9" y="11" width="1" height="1" fill="#fff"/><rect x="10" y="11" width="2" height="1" fill="#808080"/><rect x="0" y="12" width="1" height="1" fill="#fff"/><rect x="1" y="12" width="2" height="1" fill="#808080"/><rect x="4" y="12" width="1" height="1" fill="#fff"/><rect x="5" y="12" width="2" height="1" fill="#808080"/><rect x="8" y="12" width="1" height="1" fill="#fff"/><rect x="9" y="12" width="2" height="1" fill="#808080"/><rect x="12" y="12" width="1" height="1" fill="#fff"/></svg>
<div style="left:201px;top:140px;width:510px;height:326px;background:#d4d0c8;box-shadow:inset -1px -1px #404040,inset 1px 1px #d4d0c8,inset -2px -2px #808080,inset 2px 2px #fff"></div>
<div style="left:204px;top:143px;width:504px;height:18px;background:linear-gradient(90deg,#0a246a,#a6caf0)"></div>
<div style="left:690px;top:145px;width:16px;height:14px;background:#d4d0c8;box-shadow:inset -1px -1px #404040,inset 1px 1px #fff,inset -2px -2px #808080,inset 2px 2px #d4d0c8;"></div>
<svg style="position:absolute;left:694px;top:148px" width="8" height="7" viewBox="0 0 8 7" shape-rendering="crispEdges"><rect x="0" y="0" width="2" height="1" fill="#000"/><rect x="6" y="0" width="2" height="1" fill="#000"/><rect x="1" y="1" width="2" height="1" fill="#000"/><rect x="5" y="1" width="2" height="1" fill="#000"/><rect x="2" y="2" width="4" height="1" fill="#000"/><rect x="3" y="3" width="2" height="1" fill="#000"/><rect x="2" y="4" width="4" height="1" fill="#000"/><rect x="1" y="5" width="2" height="1" fill="#000"/><rect x="5" y="5" width="2" height="1" fill="#000"/><rect x="0" y="6" width="2" height="1" fill="#000"/><rect x="6" y="6" width="2" height="1" fill="#000"/></svg>
<div style="left:216px;top:179px;width:176px;height:134px;box-sizing:border-box;border:1px solid #fff"></div>
<div style="left:215px;top:178px;width:176px;height:134px;box-sizing:border-box;border:1px solid #808080"></div>
<div style="left:217px;top:330px;width:176px;height:87px;box-sizing:border-box;border:1px solid #fff"></div>
<div style="left:216px;top:329px;width:176px;height:87px;box-sizing:border-box;border:1px solid #808080"></div>
<div style="left:405px;top:179px;width:287px;height:133px;box-sizing:border-box;border:1px solid #fff"></div>
<div style="left:404px;top:178px;width:287px;height:133px;box-sizing:border-box;border:1px solid #808080"></div>
<div style="left:405px;top:330px;width:289px;height:87px;box-sizing:border-box;border:1px solid #fff"></div>
<div style="left:404px;top:329px;width:289px;height:87px;box-sizing:border-box;border:1px solid #808080"></div>
<div style="left:222px;top:174px;width:75px;height:14px;background:#d4d0c8"></div>
<div style="left:223px;top:325px;width:108px;height:14px;background:#d4d0c8"></div>
<div style="left:410px;top:174px;width:97px;height:14px;background:#d4d0c8"></div>
<div style="left:411px;top:325px;width:147px;height:14px;background:#d4d0c8"></div>
<div style="left:320px;top:195px;width:56px;height:21px;background:#fff;box-shadow:inset -1px -1px #fff,inset 1px 1px #808080,inset -2px -2px #d4d0c8,inset 2px 2px #404040"></div>
<div style="left:320px;top:227px;width:56px;height:21px;background:#fff;box-shadow:inset -1px -1px #fff,inset 1px 1px #808080,inset -2px -2px #d4d0c8,inset 2px 2px #404040"></div>
<div style="left:359px;top:229px;width:15px;height:9px;background:#d4d0c8;box-shadow:inset -1px -1px #404040,inset 1px 1px #d4d0c8,inset -2px -2px #808080,inset 2px 2px #fff"></div>
<div style="left:359px;top:238px;width:15px;height:8px;background:#d4d0c8;box-shadow:inset -1px -1px #404040,inset 1px 1px #d4d0c8,inset -2px -2px #808080,inset 2px 2px #fff"></div>
<div style="left:366px;top:232px;width:1px;height:1px;background:#000"></div>
<div style="left:365px;top:233px;width:3px;height:1px;background:#000"></div>
<div style="left:365px;top:241px;width:3px;height:1px;background:#000"></div>
<div style="left:366px;top:242px;width:1px;height:1px;background:#000"></div>
<div style="left:320px;top:282px;width:56px;height:21px;background:#fff;box-shadow:inset -1px -1px #fff,inset 1px 1px #808080,inset -2px -2px #d4d0c8,inset 2px 2px #404040"></div>
<div style="left:358px;top:284px;width:16px;height:17px;background:#d4d0c8;box-shadow:inset -1px -1px #404040,inset 1px 1px #d4d0c8,inset -2px -2px #808080,inset 2px 2px #fff"></div>
<div style="left:362px;top:290px;width:7px;height:1px;background:#000"></div>
<div style="left:363px;top:291px;width:5px;height:1px;background:#000"></div>
<div style="left:364px;top:292px;width:3px;height:1px;background:#000"></div>
<div style="left:365px;top:293px;width:1px;height:1px;background:#000"></div>
<div style="left:291px;top:346px;width:84px;height:21px;background:#fff;box-shadow:inset -1px -1px #fff,inset 1px 1px #808080,inset -2px -2px #d4d0c8,inset 2px 2px #404040"></div>
<div style="left:357px;top:348px;width:16px;height:17px;background:#d4d0c8;box-shadow:inset -1px -1px #404040,inset 1px 1px #d4d0c8,inset -2px -2px #808080,inset 2px 2px #fff"></div>
<div style="left:361px;top:354px;width:7px;height:1px;background:#000"></div>
<div style="left:362px;top:355px;width:5px;height:1px;background:#000"></div>
<div style="left:363px;top:356px;width:3px;height:1px;background:#000"></div>
<div style="left:364px;top:357px;width:1px;height:1px;background:#000"></div>
<div style="left:291px;top:383px;width:84px;height:21px;background:#fff;box-shadow:inset -1px -1px #fff,inset 1px 1px #808080,inset -2px -2px #d4d0c8,inset 2px 2px #404040"></div>
<div style="left:357px;top:385px;width:16px;height:17px;background:#d4d0c8;box-shadow:inset -1px -1px #404040,inset 1px 1px #d4d0c8,inset -2px -2px #808080,inset 2px 2px #fff"></div>
<div style="left:361px;top:391px;width:7px;height:1px;background:#000"></div>
<div style="left:362px;top:392px;width:5px;height:1px;background:#000"></div>
<div style="left:363px;top:393px;width:3px;height:1px;background:#000"></div>
<div style="left:364px;top:394px;width:1px;height:1px;background:#000"></div>
<svg style="position:absolute;left:420px;top:210px" width="12" height="12" viewBox="0 0 12 12" shape-rendering="crispEdges"><rect x="4" y="0" width="4" height="1" fill="#808080"/><rect x="2" y="1" width="2" height="1" fill="#808080"/><rect x="4" y="1" width="4" height="1" fill="#404040"/><rect x="8" y="1" width="2" height="1" fill="#808080"/><rect x="1" y="2" width="1" height="1" fill="#808080"/><rect x="2" y="2" width="2" height="1" fill="#404040"/><rect x="4" y="2" width="4" height="1" fill="#fff"/><rect x="8" y="2" width="2" height="1" fill="#404040"/><rect x="10" y="2" width="1" height="1" fill="#fff"/><rect x="1" y="3" width="1" height="1" fill="#808080"/><rect x="2" y="3" width="1" height="1" fill="#404040"/><rect x="3" y="3" width="6" height="1" fill="#fff"/><rect x="9" y="3" width="1" height="1" fill="#d4d0c8"/><rect x="10" y="3" width="1" height="1" fill="#fff"/><rect x="0" y="4" width="1" height="1" fill="#808080"/><rect x="1" y="4" width="1" height="1" fill="#404040"/><rect x="2" y="4" width="3" height="1" fill="#fff"/><rect x="5" y="4" width="2" height="1" fill="#000"/><rect x="7" y="4" width="3" height="1" fill="#fff"/><rect x="10" y="4" width="1" height="1" fill="#d4d0c8"/><rect x="11" y="4" width="1" height="1" fill="#fff"/><rect x="0" y="5" width="1" height="1" fill="#808080"/><rect x="1" y="5" width="1" height="1" fill="#404040"/><rect x="2" y="5" width="2" height="1" fill="#fff"/><rect x="4" y="5" width="4" height="1" fill="#000"/><rect x="8" y="5" width="2" height="1" fill="#fff"/><rect x="10" y="5" width="1" height="1" fill="#d4d0c8"/><rect x="11" y="5" width="1" height="1" fill="#fff"/><rect x="0" y="6" width="1" height="1" fill="#808080"/><rect x="1" y="6" width="1" height="1" fill="#404040"/><rect x="2" y="6" width="2" height="1" fill="#fff"/><rect x="4" y="6" width="4" height="1" fill="#000"/><rect x="8" y="6" width="2" height="1" fill="#fff"/><rect x="10" y="6" width="1" height="1" fill="#d4d0c8"/><rect x="11" y="6" width="1" height="1" fill="#fff"/><rect x="0" y="7" width="1" height="1" fill="#808080"/><rect x="1" y="7" width="1" height="1" fill="#404040"/><rect x="2" y="7" width="3" height="1" fill="#fff"/><rect x="5" y="7" width="2" height="1" fill="#000"/><rect x="7" y="7" width="3" height="1" fill="#fff"/><rect x="10" y="7" width="1" height="1" fill="#d4d0c8"/><rect x="11" y="7" width="1" height="1" fill="#fff"/><rect x="1" y="8" width="1" height="1" fill="#808080"/><rect x="2" y="8" width="1" height="1" fill="#404040"/><rect x="3" y="8" width="6" height="1" fill="#fff"/><rect x="9" y="8" width="1" height="1" fill="#d4d0c8"/><rect x="10" y="8" width="1" height="1" fill="#fff"/><rect x="1" y="9" width="1" height="1" fill="#808080"/><rect x="2" y="9" width="2" height="1" fill="#d4d0c8"/><rect x="4" y="9" width="4" height="1" fill="#fff"/><rect x="8" y="9" width="2" height="1" fill="#d4d0c8"/><rect x="10" y="9" width="1" height="1" fill="#fff"/><rect x="2" y="10" width="2" height="1" fill="#fff"/><rect x="4" y="10" width="4" height="1" fill="#d4d0c8"/><rect x="8" y="10" width="2" height="1" fill="#fff"/><rect x="4" y="11" width="4" height="1" fill="#fff"/></svg>
<svg style="position:absolute;left:420px;top:244px" width="12" height="12" viewBox="0 0 12 12" shape-rendering="crispEdges"><rect x="4" y="0" width="4" height="1" fill="#808080"/><rect x="2" y="1" width="2" height="1" fill="#808080"/><rect x="4" y="1" width="4" height="1" fill="#404040"/><rect x="8" y="1" width="2" height="1" fill="#808080"/><rect x="1" y="2" width="1" height="1" fill="#808080"/><rect x="2" y="2" width="2" height="1" fill="#404040"/><rect x="4" y="2" width="4" height="1" fill="#fff"/><rect x="8" y="2" width="2" height="1" fill="#404040"/><rect x="10" y="2" width="1" height="1" fill="#fff"/><rect x="1" y="3" width="1" height="1" fill="#808080"/><rect x="2" y="3" width="1" height="1" fill="#404040"/><rect x="3" y="3" width="6" height="1" fill="#fff"/><rect x="9" y="3" width="1" height="1" fill="#d4d0c8"/><rect x="10" y="3" width="1" height="1" fill="#fff"/><rect x="0" y="4" width="1" height="1" fill="#808080"/><rect x="1" y="4" width="1" height="1" fill="#404040"/><rect x="2" y="4" width="8" height="1" fill="#fff"/><rect x="10" y="4" width="1" height="1" fill="#d4d0c8"/><rect x="11" y="4" width="1" height="1" fill="#fff"/><rect x="0" y="5" width="1" height="1" fill="#808080"/><rect x="1" y="5" width="1" height="1" fill="#404040"/><rect x="2" y="5" width="8" height="1" fill="#fff"/><rect x="10" y="5" width="1" height="1" fill="#d4d0c8"/><rect x="11" y="5" width="1" height="1" fill="#fff"/><rect x="0" y="6" width="1" height="1" fill="#808080"/><rect x="1" y="6" width="1" height="1" fill="#404040"/><rect x="2" y="6" width="8" height="1" fill="#fff"/><rect x="10" y="6" width="1" height="1" fill="#d4d0c8"/><rect x="11" y="6" width="1" height="1" fill="#fff"/><rect x="0" y="7" width="1" height="1" fill="#808080"/><rect x="1" y="7" width="1" height="1" fill="#404040"/><rect x="2" y="7" width="8" height="1" fill="#fff"/><rect x="10" y="7" width="1" height="1" fill="#d4d0c8"/><rect x="11" y="7" width="1" height="1" fill="#fff"/><rect x="1" y="8" width="1" height="1" fill="#808080"/><rect x="2" y="8" width="1" height="1" fill="#404040"/><rect x="3" y="8" width="6" height="1" fill="#fff"/><rect x="9" y="8" width="1" height="1" fill="#d4d0c8"/><rect x="10" y="8" width="1" height="1" fill="#fff"/><rect x="1" y="9" width="1" height="1" fill="#808080"/><rect x="2" y="9" width="2" height="1" fill="#d4d0c8"/><rect x="4" y="9" width="4" height="1" fill="#fff"/><rect x="8" y="9" width="2" height="1" fill="#d4d0c8"/><rect x="10" y="9" width="1" height="1" fill="#fff"/><rect x="2" y="10" width="2" height="1" fill="#fff"/><rect x="4" y="10" width="4" height="1" fill="#d4d0c8"/><rect x="8" y="10" width="2" height="1" fill="#fff"/><rect x="4" y="11" width="4" height="1" fill="#fff"/></svg>
<svg style="position:absolute;left:420px;top:278px" width="12" height="12" viewBox="0 0 12 12" shape-rendering="crispEdges"><rect x="4" y="0" width="4" height="1" fill="#808080"/><rect x="2" y="1" width="2" height="1" fill="#808080"/><rect x="4" y="1" width="4" height="1" fill="#404040"/><rect x="8" y="1" width="2" height="1" fill="#808080"/><rect x="1" y="2" width="1" height="1" fill="#808080"/><rect x="2" y="2" width="2" height="1" fill="#404040"/><rect x="4" y="2" width="4" height="1" fill="#fff"/><rect x="8" y="2" width="2" height="1" fill="#404040"/><rect x="10" y="2" width="1" height="1" fill="#fff"/><rect x="1" y="3" width="1" height="1" fill="#808080"/><rect x="2" y="3" width="1" height="1" fill="#404040"/><rect x="3" y="3" width="6" height="1" fill="#fff"/><rect x="9" y="3" width="1" height="1" fill="#d4d0c8"/><rect x="10" y="3" width="1" height="1" fill="#fff"/><rect x="0" y="4" width="1" height="1" fill="#808080"/><rect x="1" y="4" width="1" height="1" fill="#404040"/><rect x="2" y="4" width="8" height="1" fill="#fff"/><rect x="10" y="4" width="1" height="1" fill="#d4d0c8"/><rect x="11" y="4" width="1" height="1" fill="#fff"/><rect x="0" y="5" width="1" height="1" fill="#808080"/><rect x="1" y="5" width="1" height="1" fill="#404040"/><rect x="2" y="5" width="8" height="1" fill="#fff"/><rect x="10" y="5" width="1" height="1" fill="#d4d0c8"/><rect x="11" y="5" width="1" height="1" fill="#fff"/><rect x="0" y="6" width="1" height="1" fill="#808080"/><rect x="1" y="6" width="1" height="1" fill="#404040"/><rect x="2" y="6" width="8" height="1" fill="#fff"/><rect x="10" y="6" width="1" height="1" fill="#d4d0c8"/><rect x="11" y="6" width="1" height="1" fill="#fff"/><rect x="0" y="7" width="1" height="1" fill="#808080"/><rect x="1" y="7" width="1" height="1" fill="#404040"/><rect x="2" y="7" width="8" height="1" fill="#fff"/><rect x="10" y="7" width="1" height="1" fill="#d4d0c8"/><rect x="11" y="7" width="1" height="1" fill="#fff"/><rect x="1" y="8" width="1" height="1" fill="#808080"/><rect x="2" y="8" width="1" height="1" fill="#404040"/><rect x="3" y="8" width="6" height="1" fill="#fff"/><rect x="9" y="8" width="1" height="1" fill="#d4d0c8"/><rect x="10" y="8" width="1" height="1" fill="#fff"/><rect x="1" y="9" width="1" height="1" fill="#808080"/><rect x="2" y="9" width="2" height="1" fill="#d4d0c8"/><rect x="4" y="9" width="4" height="1" fill="#fff"/><rect x="8" y="9" width="2" height="1" fill="#d4d0c8"/><rect x="10" y="9" width="1" height="1" fill="#fff"/><rect x="2" y="10" width="2" height="1" fill="#fff"/><rect x="4" y="10" width="4" height="1" fill="#d4d0c8"/><rect x="8" y="10" width="2" height="1" fill="#fff"/><rect x="4" y="11" width="4" height="1" fill="#fff"/></svg>
<div style="left:486px;top:212px;width:48px;height:18px;background:#d4d0c8;box-shadow:inset -1px -1px #fff,inset 1px 1px #808080"></div>
<div style="left:554px;top:214px;width:44px;height:18px;background:#d4d0c8;box-shadow:inset -1px -1px #fff,inset 1px 1px #808080"></div>
<div style="left:617px;top:214px;width:44px;height:18px;background:#d4d0c8;box-shadow:inset -1px -1px #fff,inset 1px 1px #808080"></div>
<div style="left:486px;top:243px;width:48px;height:18px;background:#d4d0c8;box-shadow:inset -1px -1px #fff,inset 1px 1px #808080"></div>
<div style="left:554px;top:242px;width:44px;height:18px;background:#d4d0c8;box-shadow:inset -1px -1px #fff,inset 1px 1px #808080"></div>
<div style="left:617px;top:242px;width:44px;height:18px;background:#d4d0c8;box-shadow:inset -1px -1px #fff,inset 1px 1px #808080"></div>
<div style="left:486px;top:273px;width:48px;height:20px;background:#fff;box-shadow:inset -1px -1px #fff,inset 1px 1px #808080,inset -2px -2px #d4d0c8,inset 2px 2px #404040"></div>
<div style="left:554px;top:273px;width:44px;height:20px;background:#fff;box-shadow:inset -1px -1px #fff,inset 1px 1px #808080,inset -2px -2px #d4d0c8,inset 2px 2px #404040"></div>
<div style="left:620px;top:273px;width:30px;height:20px;background:#fff;box-shadow:inset -1px -1px #fff,inset 1px 1px #808080,inset -2px -2px #d4d0c8,inset 2px 2px #404040"></div>
<div style="left:518px;top:344px;width:57px;height:21px;background:#fff;box-shadow:inset -1px -1px #fff,inset 1px 1px #808080,inset -2px -2px #d4d0c8,inset 2px 2px #404040"></div>
<div style="left:558px;top:346px;width:15px;height:9px;background:#d4d0c8;box-shadow:inset -1px -1px #404040,inset 1px 1px #d4d0c8,inset -2px -2px #808080,inset 2px 2px #fff"></div>
<div style="left:558px;top:355px;width:15px;height:8px;background:#d4d0c8;box-shadow:inset -1px -1px #404040,inset 1px 1px #d4d0c8,inset -2px -2px #808080,inset 2px 2px #fff"></div>
<div style="left:565px;top:349px;width:1px;height:1px;background:#000"></div>
<div style="left:564px;top:350px;width:3px;height:1px;background:#000"></div>
<div style="left:564px;top:358px;width:3px;height:1px;background:#000"></div>
<div style="left:565px;top:359px;width:1px;height:1px;background:#000"></div>
<div style="left:519px;top:380px;width:57px;height:21px;background:#fff;box-shadow:inset -1px -1px #fff,inset 1px 1px #808080,inset -2px -2px #d4d0c8,inset 2px 2px #404040"></div>
<div style="left:590px;top:380px;width:90px;height:21px;background:#fff;box-shadow:inset -1px -1px #fff,inset 1px 1px #808080,inset -2px -2px #d4d0c8,inset 2px 2px #404040"></div>
<div style="left:662px;top:382px;width:16px;height:17px;background:#d4d0c8;box-shadow:inset -1px -1px #404040,inset 1px 1px #d4d0c8,inset -2px -2px #808080,inset 2px 2px #fff"></div>
<div style="left:666px;top:388px;width:7px;height:1px;background:#000"></div>
<div style="left:667px;top:389px;width:5px;height:1px;background:#000"></div>
<div style="left:668px;top:390px;width:3px;height:1px;background:#000"></div>
<div style="left:669px;top:391px;width:1px;height:1px;background:#000"></div>
<div style="left:437px;top:429px;width:75px;height:23px;background:#d4d0c8;box-shadow:inset -1px -1px #404040,inset 1px 1px #fff,inset -2px -2px #808080,inset 2px 2px #d4d0c8;"></div>
<div style="left:457px;top:445px;width:7px;height:1px;background:#000"></div>
<div style="left:528px;top:429px;width:75px;height:23px;background:#000"></div>
<div style="left:529px;top:430px;width:73px;height:21px;background:#d4d0c8;box-shadow:inset -1px -1px #404040,inset 1px 1px #fff,inset -2px -2px #808080,inset 2px 2px #d4d0c8;"></div>
<div style="left:532px;top:433px;width:67px;height:15px;box-sizing:border-box;border:1px dotted #000"></div>
<div style="left:621px;top:429px;width:75px;height:23px;background:#d4d0c8;box-shadow:inset -1px -1px #404040,inset 1px 1px #fff,inset -2px -2px #808080,inset 2px 2px #d4d0c8;"></div>
<span style="left:25px;top:4px;font-size:11.6px;font-weight:700;color:#d4d0c8;letter-spacing:0.429px;">Untitled - Arta</span>
<span style="left:11px;top:23px;font-size:11px;font-weight:400;color:#808080;">File</span>
<span style="left:40px;top:23px;font-size:11px;font-weight:400;color:#808080;">Overlay</span>
<span style="left:88px;top:23px;font-size:11px;font-weight:400;color:#808080;">Edit</span>
<span style="left:120px;top:23px;font-size:11px;font-weight:400;color:#808080;transform-origin:0px 0;transform:scaleX(0.9167);">View</span>
<span style="left:153px;top:23px;font-size:11px;font-weight:400;color:#808080;letter-spacing:-0.143px;">Recorder</span>
<span style="left:210px;top:23px;font-size:11px;font-weight:400;color:#808080;letter-spacing:-0.125px;">Generator</span>
<span style="left:269px;top:23px;font-size:11px;font-weight:400;color:#808080;letter-spacing:0.250px;">Setup</span>
<span style="left:311px;top:23px;font-size:11px;font-weight:400;color:#808080;letter-spacing:-0.250px;">Tools</span>
<span style="left:347px;top:23px;font-size:11px;font-weight:400;color:#808080;">Mode</span>
<span style="left:384px;top:23px;font-size:11px;font-weight:400;color:#808080;letter-spacing:0.333px;">Help</span>
<span style="left:14px;top:72px;font-size:11px;font-weight:400;color:#000;transform-origin:0px 0;transform:scaleX(0.9000);">Gen</span>
<span style="left:44px;top:73px;font-size:11px;font-weight:400;color:#000;transform-origin:1px 0;transform:scaleX(0.9048);">Sine</span>
<span style="left:133px;top:72px;font-size:11px;font-weight:400;color:#000;">Fs(Hz)</span>
<span style="left:173px;top:73px;font-size:11px;font-weight:400;color:#000;letter-spacing:0.200px;">192000</span>
<span style="left:241px;top:72px;font-size:11px;font-weight:400;color:#000;transform-origin:1px 0;transform:scaleX(0.8947);">FFT</span>
<span style="left:269px;top:73px;font-size:11px;font-weight:400;color:#000;letter-spacing:0.250px;">65536</span>
<span style="left:338px;top:72px;font-size:11px;font-weight:400;color:#000;">Wnd</span>
<span style="left:369px;top:73px;font-size:11px;font-weight:400;color:#000;">Hanning</span>
<span style="left:453px;top:72px;font-size:11px;font-weight:400;color:#000;letter-spacing:0.500px;">Avg</span>
<span style="left:483px;top:73px;font-size:11px;font-weight:400;color:#000;">None</span>
<span style="left:555px;top:72px;font-size:11px;font-weight:400;color:#000;">Reset</span>
<span style="left:66px;top:118px;font-size:13px;font-weight:400;color:#000;letter-spacing:0.048px;">Spectrum magnitude dBV</span>
<span style="left:746px;top:118px;font-size:12px;font-weight:400;color:#000;letter-spacing:-0.100px;">Left  Avg:0</span>
<span style="left:42px;top:129px;font-size:12px;font-weight:400;color:#000;">0.0</span>
<span style="left:31px;top:172px;font-size:12px;font-weight:400;color:#000;">-10.0</span>
<span style="left:31px;top:215px;font-size:12px;font-weight:400;color:#000;">-20.0</span>
<span style="left:31px;top:258px;font-size:12px;font-weight:400;color:#000;">-30.0</span>
<span style="left:31px;top:301px;font-size:12px;font-weight:400;color:#000;">-40.0</span>
<span style="left:31px;top:345px;font-size:12px;font-weight:400;color:#000;">-50.0</span>
<span style="left:31px;top:388px;font-size:12px;font-weight:400;color:#000;">-60.0</span>
<span style="left:31px;top:431px;font-size:12px;font-weight:400;color:#000;">-70.0</span>
<span style="left:31px;top:474px;font-size:12px;font-weight:400;color:#000;">-80.0</span>
<span style="left:31px;top:517px;font-size:12px;font-weight:400;color:#000;">-90.0</span>
<span style="left:58px;top:531px;font-size:12px;font-weight:400;color:#000;">20</span>
<span style="left:137px;top:531px;font-size:12px;font-weight:400;color:#000;">50</span>
<span style="left:194px;top:531px;font-size:12px;font-weight:400;color:#000;">100</span>
<span style="left:254px;top:531px;font-size:12px;font-weight:400;color:#000;">200</span>
<span style="left:333px;top:531px;font-size:12px;font-weight:400;color:#000;">500</span>
<span style="left:396px;top:531px;font-size:12px;font-weight:400;color:#000;">1k</span>
<span style="left:456px;top:531px;font-size:12px;font-weight:400;color:#000;">2k</span>
<span style="left:536px;top:531px;font-size:12px;font-weight:400;color:#000;">5k</span>
<span style="left:593px;top:531px;font-size:12px;font-weight:400;color:#000;">10k</span>
<span style="left:652px;top:531px;font-size:12px;font-weight:400;color:#000;">20k</span>
<span style="left:732px;top:531px;font-size:12px;font-weight:400;color:#000;">50k</span>
<span style="left:788px;top:531px;font-size:12px;font-weight:400;color:#000;">100k</span>
<span style="left:64px;top:546px;font-size:12px;font-weight:400;color:#000;letter-spacing:0.500px;">Cursor:</span>
<span style="left:117px;top:546px;font-size:12px;font-weight:400;color:#000;">20.5 Hz,</span>
<span style="left:164px;top:546px;font-size:12px;font-weight:400;color:#000;letter-spacing:0.333px;">-116.61 dB</span>
<span style="left:64px;top:564px;font-size:12px;font-weight:400;color:#c00000;transform-origin:1px 0;transform:scaleX(0.9444);">RMS =</span>
<span style="left:106px;top:564px;font-size:12px;font-weight:400;color:#c00000;">-23.2 dBV</span>
<span style="left:171px;top:564px;font-size:12px;font-weight:400;color:#c00000;letter-spacing:0.182px;">THD =0.0080%</span>
<span style="left:267px;top:564px;font-size:12px;font-weight:400;color:#c00000;letter-spacing:0.091px;">THD+N =0.25%</span>
<span style="left:722px;top:546px;font-size:12px;font-weight:400;color:#000;">Frequency(Hz)</span>
<span style="left:806px;top:137px;font-size:13px;font-weight:400;color:#000;">A</span>
<span style="left:806px;top:151px;font-size:13px;font-weight:400;color:#000;">R</span>
<span style="left:807px;top:165px;font-size:13px;font-weight:400;color:#000;">T</span>
<span style="left:806px;top:179px;font-size:13px;font-weight:400;color:#000;">A</span>
<span style="left:873px;top:97px;font-size:11px;font-weight:400;color:#000;">Top</span>
<span style="left:875px;top:163px;font-size:11px;font-weight:400;color:#000;letter-spacing:0.500px;">Fit</span>
<span style="left:866px;top:195px;font-size:11px;font-weight:400;color:#000;letter-spacing:-0.250px;">Range</span>
<span style="left:873px;top:264px;font-size:11px;font-weight:400;color:#000;">Set</span>
<span style="left:866px;top:297px;font-size:11px;font-weight:400;color:#000;letter-spacing:-0.200px;">FrHigh</span>
<span style="left:869px;top:342px;font-size:11px;font-weight:400;color:#000;letter-spacing:-0.250px;">FrLow</span>
<span style="left:7px;top:584px;font-size:11px;font-weight:400;color:#000;letter-spacing:-0.250px;">Ready</span>
<span style="left:586px;top:584px;font-size:11px;font-weight:400;color:#000;letter-spacing:0.250px;">L:-20.1dB</span>
<span style="left:661px;top:584px;font-size:11px;font-weight:400;color:#000;letter-spacing:0.250px;">R:-25.2dB</span>
<span style="left:737px;top:584px;font-size:11px;font-weight:400;color:#000;letter-spacing:-0.125px;">Spectrum Analyzer</span>
<span style="left:206px;top:142px;font-size:11.6px;font-weight:700;color:#fff;letter-spacing:0.095px;">Signal Generator Setup</span>
<span style="left:223px;top:170px;font-size:11px;font-weight:400;color:#000;">Sine generator</span>
<span style="left:224px;top:321px;font-size:11px;font-weight:400;color:#000;letter-spacing:0.050px;">Signal generator type</span>
<span style="left:412px;top:170px;font-size:11px;font-weight:400;color:#000;letter-spacing:-0.059px;">Two sine generator</span>
<span style="left:412px;top:321px;font-size:11px;font-weight:400;color:#000;letter-spacing:-0.071px;">Multitone and noise generator</span>
<span style="left:224px;top:198px;font-size:11px;font-weight:400;color:#000;">Frequency (Hz)</span>
<span style="left:339px;top:195px;font-size:11px;font-weight:400;color:#000;letter-spacing:0.250px;">10000</span>
<span style="left:224px;top:227px;font-size:11px;font-weight:400;color:#000;letter-spacing:-0.294px;">Peak Level (dB FS)</span>
<span style="left:326px;top:227px;font-size:11px;font-weight:400;color:#000;">-3</span>
<span style="left:224px;top:255px;font-size:11px;font-weight:400;color:#000;letter-spacing:-0.238px;">RMS Voltage:0.501378 V</span>
<span style="left:224px;top:284px;font-size:11px;font-weight:400;color:#000;">Dither Level</span>
<span style="left:323px;top:283px;font-size:11px;font-weight:400;color:#000;letter-spacing:0.200px;">16-bit</span>
<span style="left:224px;top:343px;font-size:11px;font-weight:400;color:#000;letter-spacing:-0.143px;">Spectrum</span>
<span style="left:224px;top:356px;font-size:11px;font-weight:400;color:#000;letter-spacing:-0.333px;">mode</span>
<span style="left:294px;top:347px;font-size:11px;font-weight:400;color:#000;transform-origin:1px 0;transform:scaleX(0.9048);">Sine</span>
<span style="left:224px;top:382px;font-size:11px;font-weight:400;color:#000;letter-spacing:-0.333px;">FR mode</span>
<span style="left:294px;top:384px;font-size:11px;font-weight:400;color:#000;letter-spacing:-0.167px;">PN pink</span>
<span style="left:497px;top:190px;font-size:11px;font-weight:400;color:#000;">Freq1</span>
<span style="left:559px;top:190px;font-size:11px;font-weight:400;color:#000;letter-spacing:0.250px;">Freq2</span>
<span style="left:622px;top:190px;font-size:11px;font-weight:400;color:#000;">Magn</span>
<span style="left:436px;top:207px;font-size:11px;font-weight:400;color:#000;">Def1</span>
<span style="left:436px;top:241px;font-size:11px;font-weight:400;color:#000;letter-spacing:0.333px;">Def2</span>
<span style="left:436px;top:275px;font-size:11px;font-weight:400;color:#000;letter-spacing:-0.333px;">User</span>
<span style="left:487px;top:210px;font-size:11px;font-weight:400;color:#000;transform-origin:1px 0;transform:scaleX(0.9394);">13 kHz</span>
<span style="left:554px;top:212px;font-size:11px;font-weight:400;color:#000;letter-spacing:-0.250px;">14kHz</span>
<span style="left:620px;top:212px;font-size:11px;font-weight:400;color:#000;letter-spacing:0.250px;">1 : 1</span>
<span style="left:487px;top:241px;font-size:11px;font-weight:400;color:#000;transform-origin:0px 0;transform:scaleX(0.9355);">250Hz</span>
<span style="left:555px;top:240px;font-size:11px;font-weight:400;color:#000;transform-origin:0px 0;transform:scaleX(0.9200);">8kHz</span>
<span style="left:621px;top:240px;font-size:11px;font-weight:400;color:#000;">4 : 1</span>
<span style="left:491px;top:273px;font-size:11px;font-weight:400;color:#000;letter-spacing:0.250px;">19000</span>
<span style="left:560px;top:273px;font-size:11px;font-weight:400;color:#000;">20000</span>
<span style="left:626px;top:273px;font-size:11px;font-weight:400;color:#000;">1</span>
<span style="left:654px;top:273px;font-size:11px;font-weight:400;color:#000;">: 1</span>
<span style="left:419px;top:346px;font-size:11px;font-weight:400;color:#000;letter-spacing:-0.235px;">Peak level (dB FS)</span>
<span style="left:524px;top:344px;font-size:11px;font-weight:400;color:#000;">0</span>
<span style="left:419px;top:382px;font-size:11px;font-weight:400;color:#000;letter-spacing:-0.143px;">PN Pink cut off</span>
<span style="left:525px;top:380px;font-size:11px;font-weight:400;color:#000;">20</span>
<span style="left:592px;top:359px;font-size:11px;font-weight:400;color:#000;letter-spacing:0.125px;">Multitone</span>
<span style="left:594px;top:381px;font-size:11px;font-weight:400;color:#000;letter-spacing:-0.286px;">Wideband</span>
<span style="left:456px;top:430px;font-size:11px;font-weight:400;color:#000;">Default</span>
<span style="left:548px;top:430px;font-size:11px;font-weight:400;color:#000;letter-spacing:-0.200px;">Cancel</span>
<span style="left:651px;top:430px;font-size:11px;font-weight:400;color:#000;transform-origin:0px 0;transform:scaleX(0.8750);">OK</span>
</body></html>
